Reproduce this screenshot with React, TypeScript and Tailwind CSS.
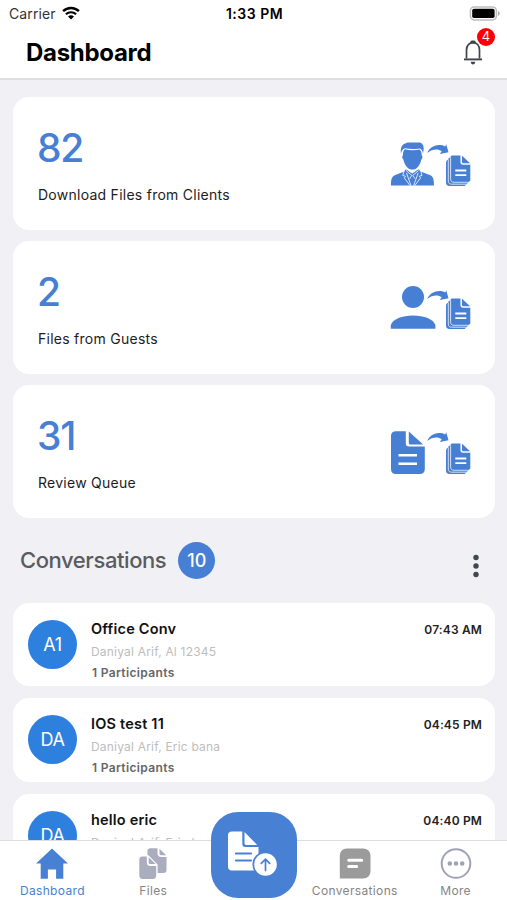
import type { ReactNode } from 'react'

interface Stat {
  count: number
  label: string
  icon: ReactNode
}

interface Conversation {
  initials: string
  title: string
  members: string
  time: string
}

// Curved arrow and the stack of files, shared by all the stat icons
function TransferGlyph({ arrowY = 0, stackY = 0 }: { arrowY?: number; stackY?: number }) {
  return (
    <>
      <path
        transform={`translate(0 ${arrowY})`}
        d="M37.200 12C40.500 4.400 49 2.200 55.200 5.500L56.200 3.200l2.300 8-8.700 1.700 1.900-2.700c-4.400-2.700-9.500-1.900-14.500 1.800z"
        fill="currentColor"
      />
      <g transform={`translate(0 ${stackY})`}>
        <path
          d="M62.500 14.600h9.300l8.500 8v16.800L74.700 45H59.500c-2.300 0-3.500-1.200-3.500-3.500V22c0-2 .7-3 2.200-3.300.2-1.400.9-2.100 2.200-2.200.2-1.300.9-1.900 2.100-1.900z"
          fill="currentColor"
        />
        <path
          d="M60.600 16.400v21.400c0 2.400 1.200 3.500 3.500 3.500h15M58.300 18.600V40c0 2.200 1.200 3.200 3.400 3.200h15"
          fill="none"
          stroke="white"
          strokeWidth=".75"
        />
        <path d="M71.200 14v7c0 1.500.6 2 2 2h7.600" fill="none" stroke="white" strokeWidth="1.500" />
        <path d="M65.300 29.500h11M65.300 34.200h11" stroke="white" strokeWidth="1.800" />
      </g>
    </>
  )
}

function ClientIcon() {
  return (
    <svg className="h-[46px] w-[82px]" viewBox="0 0 82 46" fill="none">
      <path
        d="M11 12.500c-.8-5 .6-9.500 5-10.300 1.200-.8 2.400-.7 4-.7h9c3 0 4.700 2.600 4.700 5.800 0 2-.3 3.700-.7 5.200-.3-2.800-1.500-4.200-3.200-5-4.800.8-10.200.8-14.900-.2-2 .6-3.400 2.400-3.900 5.200z"
        fill="currentColor"
      />
      <path
        d="M14.800 8.300c5 1.100 10.100 1.100 14.800.2 1.300 1 2 2.600 2.200 6 1 .4 1 3.100-.5 3.900-1 5.500-4.700 10.200-8.900 10.200s-8-4.700-9-10.200c-1.500-.8-1.500-3.500-.5-3.900.1-3.400.6-5.200 1.900-6.200z"
        fill="currentColor"
      />
      <path
        d="M1 44.600c-.2-6.500 1-9.300 4.400-10.600l8.800-3.500 1.700-2.200 6.300 4.200 6.400-4.200 2 2.200 9.200 3.500c3.300 1.300 4.200 4.100 4.200 10.600z"
        fill="currentColor"
      />
      <path
        d="M14 30l-1.200 4.400 2.700.8-1.300 1.600 5.800 7.800M30.800 30l1.200 4.400-2.700.8 1.300 1.600-5.800 7.800M16 29.500l5.800 4.900-2.200 3.400M28.700 29.500l-5.900 4.900 2.300 3.400M16.500 32l4.500 12.600M28.200 32l-4.600 12.600"
        stroke="white"
        strokeWidth=".8"
      />
      <TransferGlyph />
    </svg>
  )
}

function GuestIcon() {
  return (
    <svg className="h-[46px] w-[82px]" viewBox="0 0 82 46" fill="none">
      <circle cx="23" cy="12" r="11" fill="currentColor" />
      <path d="M.8 43.700v-3.800C2.700 34.300 12 30.500 23 30.500s20.500 3.800 22.400 9.400v3.800z" fill="currentColor" />
      <TransferGlyph arrowY={2} stackY={-1} />
    </svg>
  )
}

function ReviewIcon() {
  return (
    <svg className="h-[46px] w-[82px]" viewBox="0 0 82 46" fill="none">
      <path
        d="M6 2.200h9.800v12.100c0 2.200 1.100 3.300 3.300 3.300h15.700V40c0 3.300-1.700 5-5 5H6c-3.300 0-5-1.700-5-5V7.200c0-3.300 1.700-5 5-5z"
        fill="currentColor"
      />
      <path d="M18.800 2.400l14.400 13.200H20.600c-1.200 0-1.800-.6-1.800-1.800z" fill="currentColor" />
      <path d="M8.500 26.300h18.500M8.500 34.700h18.500" stroke="white" strokeWidth="2.400" />
      <TransferGlyph />
    </svg>
  )
}

const STATS: Stat[] = [
  { count: 82, label: 'Download Files from Clients', icon: <ClientIcon /> },
  { count: 2, label: 'Files from Guests', icon: <GuestIcon /> },
  { count: 31, label: 'Review Queue', icon: <ReviewIcon /> },
]

const CONVERSATIONS: Conversation[] = [
  { initials: 'A1', title: 'Office Conv', members: 'Daniyal Arif, Al 12345', time: '07:43 AM' },
  { initials: 'DA', title: 'IOS test 11', members: 'Daniyal Arif, Eric bana', time: '04:45 PM' },
  { initials: 'DA', title: 'hello eric', members: 'Daniyal Arif, Eric bana', time: '04:40 PM' },
]

function StatusBar() {
  return (
    <div className="grid h-7 grid-cols-3 items-center pr-[7px] pl-[9px]">
      <div className="-mt-px flex items-center gap-[6px]">
        <span className="text-[14px] tracking-[0.1px] text-[#333]">Carrier</span>
        <svg className="-mt-px h-[14px] w-[18px]" viewBox="0 0 18 14" fill="none" stroke="#000">
          <path d="M1.100 5.200a11.400 11.400 0 0 1 15.800 0" strokeWidth="2.500" />
          <path d="M3.900 8.300a7.400 7.400 0 0 1 10.200 0" strokeWidth="2.200" />
          <path d="M9 13.600l-3-3a4.300 4.300 0 0 1 6 0z" fill="#000" stroke="none" />
        </svg>
      </div>
      <span className="-mt-px text-center text-[14px] font-semibold tracking-[0.5px] whitespace-nowrap">1:33 PM</span>
      <svg className="-mt-0.5 h-[15px] w-[31px] justify-self-end" viewBox="0 0 31 15">
        <rect x="1.400" y=".9" width="26" height="13" rx="3.800" fill="#fff" stroke="#bdbdbd" strokeWidth="1.500" />
        <rect x="3.200" y="2.700" width="22.400" height="9.400" rx="1.800" fill="#000" />
        <path d="M29 5.200c2.200.6 2.200 4 0 4.600z" fill="#aaa" />
      </svg>
    </div>
  )
}

function Header() {
  return (
    <header className="h-[80px] shrink-0 border-b-2 border-[#dedfe3] bg-white">
      <StatusBar />
      <div className="flex h-[50px] items-center justify-between pr-6 pl-[26px]">
        <h1 className="text-[24px] font-bold tracking-[-0.3px]">Dashboard</h1>
        <div className="relative">
          <svg className="h-[26px] w-[20px]" viewBox="0 0 20 26" fill="none" stroke="#3f434b">
            <path d="M3.500 18.500v-8.500c0-4.500 2.800-7.400 6.500-7.400s6.500 2.900 6.500 7.400v8.500" strokeWidth="1.700" />
            <path d="M1 19.400h18" strokeWidth="1.900" />
            <path d="M8.800 1.900h2.400" strokeWidth="3" strokeLinecap="round" />
            <path d="M7.800 21.800h4.400c0 3.600-4.400 3.600-4.400 0z" fill="#3f434b" stroke="none" />
          </svg>
          <span className="absolute -top-[12px] left-[14px] flex h-[18px] w-[18px] items-center justify-center rounded-full bg-[#fb0007] text-[13px] text-white">
            4
          </span>
        </div>
      </div>
    </header>
  )
}

function StatCard({ stat }: { stat: Stat }) {
  return (
    <div className="flex h-[133px] items-center justify-between rounded-[16px] bg-white pr-[23px] pl-[25px]">
      <div className="flex flex-col">
        <span className="mt-px -ml-px text-[39px] leading-[48px] font-medium tracking-[-1.200px] text-[#477fd5]">
          {stat.count}
        </span>
        <span className="mt-[13px] text-[14px] leading-5 tracking-[0.260px] text-[#1c1c1c]">{stat.label}</span>
      </div>
      <div className="text-[#477fd5]">{stat.icon}</div>
    </div>
  )
}

function ConversationCard({ conversation }: { conversation: Conversation }) {
  return (
    <div className="flex h-[83.300px] shrink-0 rounded-[16px] bg-white pr-[13px] pl-[15px]">
      <div className="mt-[17px] flex h-[49px] w-[49px] items-center justify-center rounded-full bg-[#2e80df] text-[18px] tracking-[-0.400px] text-white">
        {conversation.initials}
      </div>
      <div className="ml-[15px] flex flex-1 flex-col pt-4">
        <span className="-ml-px text-[14.500px] leading-5 font-semibold tracking-[0.200px] text-[#111]">
          {conversation.title}
        </span>
        <span className="mt-[3px] -ml-px text-[12px] leading-5 tracking-[0.200px] text-[#bdbdbd]">
          {conversation.members}
        </span>
        <span className="mt-px text-[12px] leading-5 font-semibold tracking-[0.350px] text-[#666]">1 Participants</span>
      </div>
      <span className="pt-[17px] text-[12px] leading-5 font-semibold tracking-[0.150px] text-[#222]">
        {conversation.time}
      </span>
    </div>
  )
}

function UploadButton() {
  return (
    <button className="absolute -top-[29px] left-[211px] flex h-[86px] w-[86px] items-center justify-center rounded-[27px] bg-[#4881d4]">
      <svg className="h-[86px] w-[86px]" viewBox="0 0 86 86" fill="none">
        <path
          d="M21 19.500h10.300v12.200c0 2.200 1.100 3.200 3.200 3.200h13v20.500c0 2-1 3-3 3H21c-2.600 0-4-1.400-4-4V23.500c0-2.600 1.400-4 4-4z"
          fill="white"
        />
        <path d="M33.500 20l12.700 13h-11c-1.100 0-1.700-.6-1.700-1.700z" fill="white" />
        <path d="M25 41.500h15M25 48.500h15" stroke="#4881d4" strokeWidth="2.200" strokeLinecap="round" />
        <circle cx="54.500" cy="52.500" r="13" fill="#4881d4" />
        <circle cx="54.500" cy="52.500" r="11.300" fill="white" />
        <path d="M54.500 58.500v-11M50.300 51.300l4.200-4.200 4.200 4.200" stroke="#4881d4" strokeWidth="1.700" strokeLinecap="round" />
      </svg>
    </button>
  )
}

function HomeIcon() {
  return (
    <svg className="h-8 w-8" viewBox="0 0 32 32">
      <path d="M16 .5l16 14.900h-4.700v15.300h-7.200V21.600h-8.200v9.100H4.700V15.400H0z" fill="#4881d4" />
    </svg>
  )
}

function FilesIcon() {
  return (
    <svg className="h-8 w-8" viewBox="0 0 32 32" fill="#a9adbe">
      <path d="M13.500.2h7v4.700c0 2.600 1.400 4 4 4h5v12.900c0 2.200-1 3.200-3.200 3.200h-5.700v-8.500L11.400 7.300h-.9V3.200c0-2 1-3 3-3z" />
      <path d="M22.500.7l6.700 6.500h-5c-1.100 0-1.700-.6-1.700-1.700z" />
      <path d="M5.500 8.500h4.300v6c0 2.300 1.200 3.500 3.500 3.500h5.900v9.800c0 2-1.200 3.200-3.200 3.200H5.500c-2 0-3.200-1.200-3.200-3.200V11.700c0-2 1.200-3.200 3.200-3.200z" />
      <path d="M11.700 9.200l7 6.900h-5.300c-1.100 0-1.700-.6-1.700-1.700z" />
    </svg>
  )
}

function ChatIcon() {
  return (
    <svg className="h-8 w-8" viewBox="0 0 32 32" fill="none">
      <path
        d="M8 .5h16c4.500 0 7.500 3 7.500 7.500v15c0 4.500-3 7.500-7.500 7.500H.8V8C.8 3.500 3.500.5 8 .5z"
        fill="#9b9b9b"
      />
      <path d="M9.700 12.300h13M9.700 18.500h8" stroke="white" strokeWidth="3" strokeLinecap="round" />
    </svg>
  )
}

function MoreIcon() {
  return (
    <svg className="h-8 w-8" viewBox="0 0 32 32" fill="none">
      <circle cx="16" cy="15.500" r="14.300" stroke="#a0a3b6" strokeWidth="2" />
      <path d="M9.800 15.500h.01M16 15.500h.01M22.200 15.500h.01" stroke="#a0a3b6" strokeWidth="4.600" strokeLinecap="round" />
    </svg>
  )
}

function TabBar() {
  const tabs: { label: string; icon: ReactNode; active?: boolean }[] = [
    { label: 'Dashboard', icon: <HomeIcon />, active: true },
    { label: 'Files', icon: <FilesIcon /> },
    { label: '', icon: null },
    { label: 'Conversations', icon: <ChatIcon /> },
    { label: 'More', icon: <MoreIcon /> },
  ]

  return (
    <nav className="relative grid h-[60px] shrink-0 grid-cols-5 border-t border-[#dcdde0] bg-white pr-px pl-0.5">
      {tabs.map((tab, i) => (
        <div key={i} className="flex flex-col items-center pt-[7px]">
          {tab.icon}
          <span
            className={`mt-px text-[12px] leading-[20px] tracking-[0.350px] whitespace-nowrap ${
              tab.active ? 'text-[#4881d4]' : 'text-[#858585]'
            }`}
          >
            {tab.label}
          </span>
        </div>
      ))}
      <UploadButton />
    </nav>
  )
}

export default function App() {
  return (
    <div className="flex h-[900px] w-[507px] flex-col overflow-hidden bg-[#f0f0f5] font-['Inter',sans-serif] text-black">
      <Header />

      <main className="flex min-h-0 flex-1 flex-col overflow-hidden pr-3 pl-[13px]">
        <section className="flex flex-col gap-[11px] pt-[17px]">
          {STATS.map((stat) => (
            <StatCard key={stat.label} stat={stat} />
          ))}
        </section>

        {/* Section heading with the unread count */}
        <div className="flex h-[85px] shrink-0 items-center justify-between pr-[14px] pl-[7px]">
          <div className="flex items-center gap-3">
            <h2 className="text-[22px] font-medium tracking-[-0.420px] text-[#5a5b5f]">Conversations</h2>
            <span className="flex h-[37px] w-[37px] items-center justify-center rounded-full bg-[#477fd5] text-[18px] font-medium text-white">
              10
            </span>
          </div>
          <svg className="mt-[11px] h-6 w-[10px]" viewBox="0 0 10 24" fill="#43464f">
            <circle cx="5" cy="3.500" r="2.700" />
            <circle cx="5" cy="12" r="2.700" />
            <circle cx="5" cy="20.500" r="2.700" />
          </svg>
        </div>

        <section className="flex flex-col gap-3">
          {CONVERSATIONS.map((conversation) => (
            <ConversationCard key={conversation.title} conversation={conversation} />
          ))}
        </section>
      </main>

      <TabBar />
    </div>
  )
}
